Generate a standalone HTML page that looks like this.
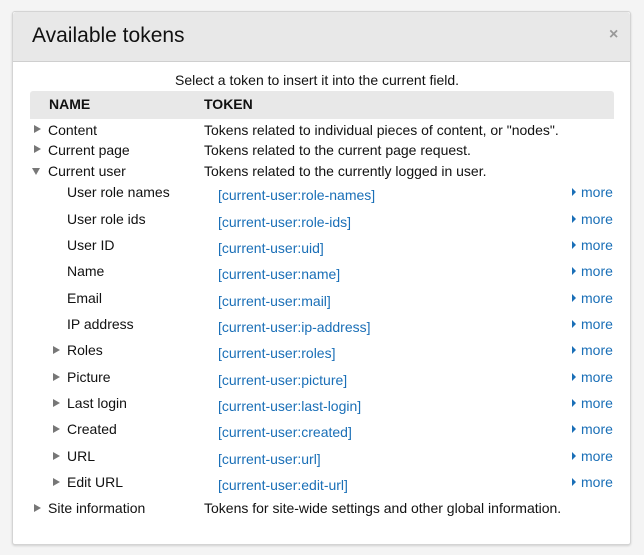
<!DOCTYPE html>
<html><head><style>
body{margin:0;width:644px;height:555px;background:#f4f4f4;font-family:"Liberation Sans",sans-serif;font-size:14px;color:#111;position:relative;overflow:hidden}
.d{position:absolute;left:12px;top:11px;width:617px;height:532px;background:#fff;border:1px solid #d4d4d4;border-radius:3px;box-shadow:0 1px 2px rgba(0,0,0,.15)}
.h{position:absolute;left:0;top:0;width:617px;height:49px;background:#e8e8e8;border-bottom:1px solid #cfcfcf;border-radius:3px 3px 0 0}
.t{position:absolute;white-space:nowrap;line-height:16px}
.a{position:absolute;width:0;height:0;border-top:4.5px solid transparent;border-bottom:4.5px solid transparent;border-left:7px solid #777}
.dn{position:absolute;width:0;height:0;border-left:4.5px solid transparent;border-right:4.5px solid transparent;border-top:7px solid #777}
.l{color:#1a6fb7}
.m{position:absolute;width:0;height:0;border-top:4px solid transparent;border-bottom:4px solid transparent;border-left:4px solid #1a6fb7}
</style></head><body>
<div class="d"><div class="h"></div></div>
<div class="t" style="left:32px;top:24px;font-size:21px;line-height:24px">Available tokens</div>
<div class="t" style="left:609px;top:27px;font-size:16px;color:#999;font-weight:bold">×</div>
<div class="t" style="left:175px;top:72px">Select a token to insert it into the current field.</div>
<div style="position:absolute;left:30px;top:91px;width:584px;height:28px;background:#e8e8e8;border-radius:3px 3px 0 0"></div>
<div class="t" style="left:49px;top:96px;font-weight:bold">NAME</div>
<div class="t" style="left:204px;top:96px;font-weight:bold">TOKEN</div>

<div class="a" style="left:34px;top:125px"></div><div class="t" style="left:48px;top:122px">Content</div><div class="t" style="left:204px;top:122px">Tokens related to individual pieces of content, or "nodes".</div>
<div class="a" style="left:34px;top:145px"></div><div class="t" style="left:48px;top:142px">Current page</div><div class="t" style="left:204px;top:142px">Tokens related to the current page request.</div>
<div class="dn" style="left:32px;top:168px"></div><div class="t" style="left:48px;top:163px">Current user</div><div class="t" style="left:204px;top:163px">Tokens related to the currently logged in user.</div>

<div class="t" style="left:67px;top:184px">User role names</div><div class="t l" style="left:218px;top:187px">[current-user:role-names]</div>
<div class="t" style="left:67px;top:211px">User role ids</div><div class="t l" style="left:218px;top:214px">[current-user:role-ids]</div>
<div class="t" style="left:67px;top:237px">User ID</div><div class="t l" style="left:218px;top:240px">[current-user:uid]</div>
<div class="t" style="left:67px;top:263px">Name</div><div class="t l" style="left:218px;top:266px">[current-user:name]</div>
<div class="t" style="left:67px;top:290px">Email</div><div class="t l" style="left:218px;top:293px">[current-user:mail]</div>
<div class="t" style="left:67px;top:316px">IP address</div><div class="t l" style="left:218px;top:319px">[current-user:ip-address]</div>
<div class="a" style="left:53px;top:346px"></div><div class="t" style="left:67px;top:342px">Roles</div><div class="t l" style="left:218px;top:345px">[current-user:roles]</div>
<div class="a" style="left:53px;top:373px"></div><div class="t" style="left:67px;top:369px">Picture</div><div class="t l" style="left:218px;top:372px">[current-user:picture]</div>
<div class="a" style="left:53px;top:399px"></div><div class="t" style="left:67px;top:395px">Last login</div><div class="t l" style="left:218px;top:398px">[current-user:last-login]</div>
<div class="a" style="left:53px;top:425px"></div><div class="t" style="left:67px;top:421px">Created</div><div class="t l" style="left:218px;top:424px">[current-user:created]</div>
<div class="a" style="left:53px;top:452px"></div><div class="t" style="left:67px;top:448px">URL</div><div class="t l" style="left:218px;top:451px">[current-user:url]</div>
<div class="a" style="left:53px;top:478px"></div><div class="t" style="left:67px;top:474px">Edit URL</div><div class="t l" style="left:218px;top:477px">[current-user:edit-url]</div>

<div class="m" style="left:572px;top:188px"></div><div class="t l" style="left:581px;top:184px">more</div>
<div class="m" style="left:572px;top:215px"></div><div class="t l" style="left:581px;top:211px">more</div>
<div class="m" style="left:572px;top:241px"></div><div class="t l" style="left:581px;top:237px">more</div>
<div class="m" style="left:572px;top:267px"></div><div class="t l" style="left:581px;top:263px">more</div>
<div class="m" style="left:572px;top:294px"></div><div class="t l" style="left:581px;top:290px">more</div>
<div class="m" style="left:572px;top:320px"></div><div class="t l" style="left:581px;top:316px">more</div>
<div class="m" style="left:572px;top:346px"></div><div class="t l" style="left:581px;top:342px">more</div>
<div class="m" style="left:572px;top:373px"></div><div class="t l" style="left:581px;top:369px">more</div>
<div class="m" style="left:572px;top:399px"></div><div class="t l" style="left:581px;top:395px">more</div>
<div class="m" style="left:572px;top:425px"></div><div class="t l" style="left:581px;top:421px">more</div>
<div class="m" style="left:572px;top:452px"></div><div class="t l" style="left:581px;top:448px">more</div>
<div class="m" style="left:572px;top:478px"></div><div class="t l" style="left:581px;top:474px">more</div>

<div class="a" style="left:34px;top:504px"></div><div class="t" style="left:48px;top:500px">Site information</div><div class="t" style="left:204px;top:500px">Tokens for site-wide settings and other global information.</div>
</body></html>
